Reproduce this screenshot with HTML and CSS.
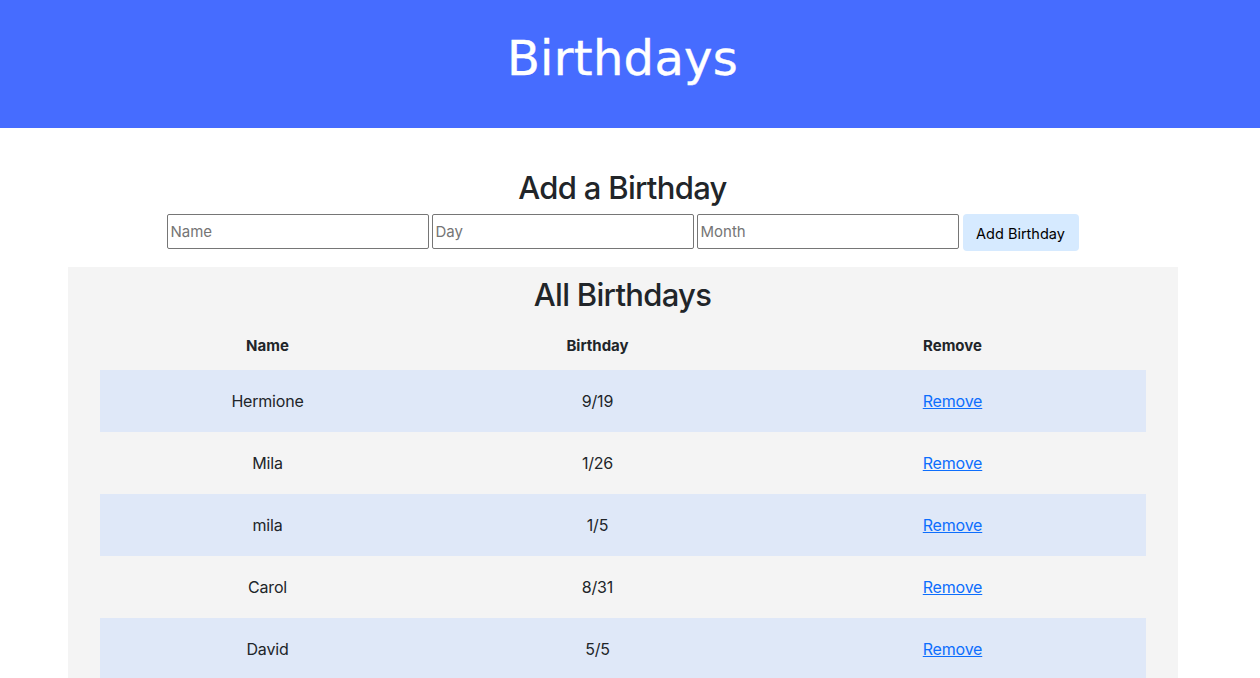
FILE: index.html
```html
<!DOCTYPE html>
<html lang="en">
<head>
<meta charset="utf-8">
<title>Birthdays</title>
<link rel="stylesheet" href="styles.css">
</head>
<body>
<header class="site-header">
  <h1 class="site-title">Birthdays</h1>
</header>
<main class="main">
  <section class="add-section">
    <h2 class="section-title">Add a Birthday</h2>
    <form class="add-form">
      <input class="field" type="text" placeholder="Name">
      <input class="field" type="text" placeholder="Day">
      <input class="field" type="text" placeholder="Month">
      <button class="add-btn" type="button">Add Birthday</button>
    </form>
  </section>
  <section class="list-section">
    <h2 class="section-title list-title">All Birthdays</h2>
    <table class="bday-table">
      <thead>
        <tr><th class="col-name">Name</th><th class="col-date">Birthday</th><th class="col-remove">Remove</th></tr>
      </thead>
      <tbody>
        <tr class="row-alt"><td>Hermione</td><td>9/19</td><td><a href="#" class="remove-link">Remove</a></td></tr>
        <tr><td>Mila</td><td>1/26</td><td><a href="#" class="remove-link">Remove</a></td></tr>
        <tr class="row-alt"><td>mila</td><td>1/5</td><td><a href="#" class="remove-link">Remove</a></td></tr>
        <tr><td>Carol</td><td>8/31</td><td><a href="#" class="remove-link">Remove</a></td></tr>
        <tr class="row-alt"><td>David</td><td>5/5</td><td><a href="#" class="remove-link">Remove</a></td></tr>
      </tbody>
    </table>
  </section>
</main>
</body>
</html>
```
FILE: styles.css
```css
html, body {
  margin: 0;
  padding: 0;
  height: 678px;
  overflow: hidden;
}
body {
  font-family: Inter, "Noto Sans", "Liberation Sans", sans-serif;
  color: #212529;
  background: #fff;
  font-size: 16px;
}
.site-header {
  background: #466cff;
  height: 128px;
  display: flex;
  align-items: center;
  justify-content: center;
  padding-right: 15px;
  box-sizing: border-box;
}
.site-title {
  margin: 0;
  font-family: "DejaVu Sans", sans-serif;
  font-weight: 400;
  font-size: 48px;
  color: #fff;
  line-height: 1;
  letter-spacing: 0.3px;
  padding-bottom: 12px;
  -webkit-text-stroke: 0.4px #fff;
}
.main {
  padding-right: 15px;
}
.add-section {
  padding-top: 41px;
  text-align: center;
}
.section-title {
  margin: 0;
  font-size: 31px;
  font-weight: 500;
  line-height: 38px;
  color: #212529;
  letter-spacing: -0.7px;
}
.add-form {
  margin-top: 7px;
  display: flex;
  justify-content: center;
  align-items: flex-start;
  gap: 3px;
}
.field {
  width: 262px;
  height: 35px;
  box-sizing: border-box;
  border: 1px solid #767676;
  border-radius: 2px;
  padding: 1px 3px;
  font-family: Inter, "Noto Sans", sans-serif;
  font-size: 15px;
  color: #212529;
  background: #fff;
}
.field::placeholder {
  color: #757575;
}
.add-btn {
  width: 116px;
  height: 37px;
  border: 0;
  border-radius: 4px;
  background: #d6eaff;
  color: #000;
  font-family: Inter, "Noto Sans", sans-serif;
  font-size: 14.5px;
  padding: 0;
  padding-top: 2px;
  margin-left: 1px;
}
.list-section {
  width: 1110px;
  margin: 16px auto 0;
  background: #f4f4f4;
  padding: 9px 32px 0;
  box-sizing: border-box;
  text-align: center;
  height: 420px;
}
.list-title {
  margin-bottom: 8px;
}
.bday-table {
  width: 100%;
  border-collapse: collapse;
}
.bday-table th {
  font-weight: 700;
  font-size: 15px;
  line-height: 24px;
  padding: 12px 0;
}
.col-name { width: 336px; }
.col-date { width: 324px; }
.bday-table td {
  font-size: 16px;
  line-height: 24px;
  padding: 19px 0;
  text-align: center;
  letter-spacing: -0.2px;
}
.row-alt {
  background: #dfe8f8;
}
.remove-link {
  color: #0d6efd;
  text-decoration: underline;
}
```
